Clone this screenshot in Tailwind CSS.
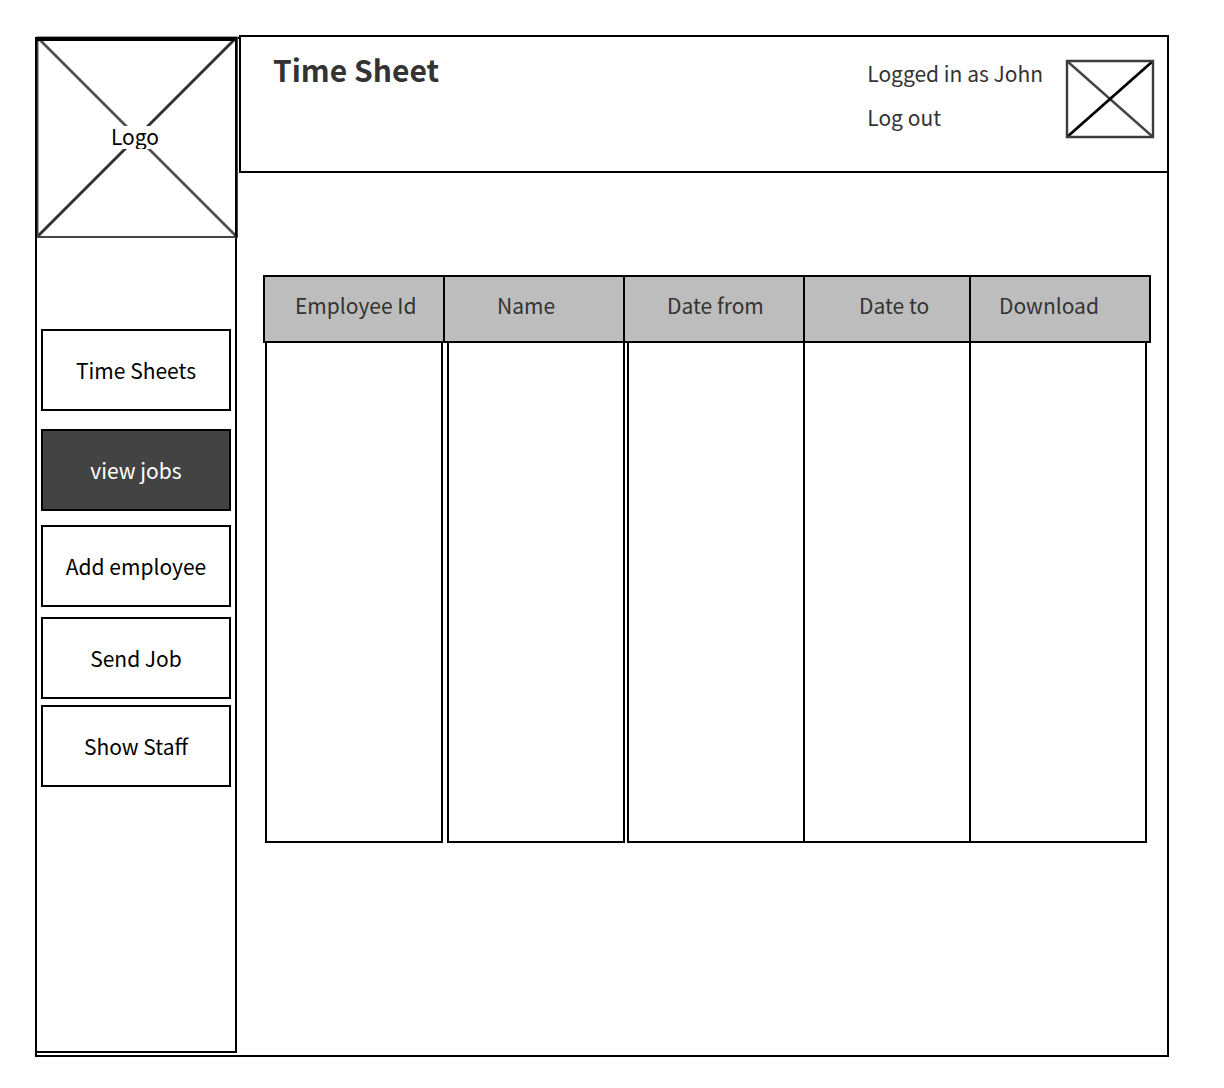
<!DOCTYPE html>
<html lang="en">
<head>
<meta charset="utf-8">
<meta name="viewport" content="width=device-width, initial-scale=1">
<title>Time Sheet</title>
<script src="https://cdn.jsdelivr.net/npm/@tailwindcss/browser@4"></script>
</head>
<body class="bg-white font-['Noto_Sans_CJK_SC','Noto_Sans',sans-serif] text-[21px] leading-8 text-[#333]">
<div class="flex min-h-screen pt-[35px] pr-[55px] pb-[31px] pl-[35px]">

  <aside class="mt-[2px] flex w-[204px] shrink-0 flex-col border-y-2 border-l-2 border-black pr-[2px] pb-[2px]">
    <div class="flex flex-1 flex-col border-y-2 border-r-2 border-black">
      <div class="-mt-[5px] -mr-[3px] -ml-px grid h-[202px] place-items-center text-black">
        <svg class="col-start-1 row-start-1 size-full" viewBox="0 0 202 202" fill="none" aria-hidden="true">
          <path d="M2 2L200 200" stroke="#505050" stroke-width="2.6"/>
          <path d="M200 2L2 200" stroke="#333" stroke-width="3"/>
          <path d="M1.500 1.500H201V201H1.500Z" stroke="#444" stroke-width="2"/>
          <path d="M0 3H201" stroke="#000" stroke-width="4"/>
          <path d="M0 1V201M200 1V201" stroke="#000" stroke-width="2"/>
        </svg>
        <span class="col-start-1 row-start-1 mr-1 h-[23px] overflow-hidden bg-white leading-[21px]">Logo</span>
      </div>
      <nav class="mt-[91px] flex flex-col px-1" aria-label="Main">
        <button type="button" class="h-[82px] border-2 border-black bg-white text-black">Time Sheets</button>
        <button type="button" aria-current="page" class="mt-[18px] h-[82px] border-2 border-black bg-[#434343] text-white">view jobs</button>
        <button type="button" class="mt-[14px] h-[82px] border-2 border-black bg-white text-black">Add employee</button>
        <button type="button" class="mt-[10px] h-[82px] border-2 border-black bg-white text-black">Send Job</button>
        <button type="button" class="mt-[6px] h-[82px] border-2 border-black bg-white text-black">Show Staff</button>
      </nav>
    </div>
  </aside>

  <div class="flex min-w-0 flex-1 flex-col border-r-2 border-b-2 border-black">
    <header class="flex h-[138px] items-start border-y-2 border-l-2 border-black pr-3 pl-8">
      <h1 class="mt-3 text-[30px] leading-10 font-bold">Time Sheet</h1>
      <div class="mt-5 mr-[22px] ml-auto flex flex-col gap-3">
        <span>Logged in as John</span>
        <a href="#">Log out</a>
      </div>
      <svg class="mt-[22px] h-[80px] w-[90px] shrink-0" viewBox="0 0 90 80" fill="none" role="img" aria-label="Profile picture">
        <path d="M2 2L88 78" stroke="#444" stroke-width="2.400"/>
        <path d="M88 2L2 78" stroke="#000" stroke-width="2.800"/>
        <path d="M2 2H88V78H2Z" stroke="#3c3c3c" stroke-width="2.400"/>
      </svg>
    </header>

    <main class="pt-[102px] pr-4 pb-8 pl-6">
      <table class="w-full table-fixed border-separate border-spacing-0">
        <colgroup>
          <col class="w-[182px]"><col class="w-[180px]"><col class="w-[180px]"><col class="w-[166px]"><col class="w-[180px]">
        </colgroup>
        <thead>
          <tr class="h-[68px] bg-[#bdbdbd] text-left align-top *:border-y-2 *:border-r-2 *:border-black *:pt-3 *:font-normal">
            <th scope="col" class="border-l-2 pl-[30px]">Employee Id</th>
            <th scope="col" class="pl-[52px]">Name</th>
            <th scope="col" class="pb-1 pl-[42px]">Date from</th>
            <th scope="col" class="pl-[54px]">Date to</th>
            <th scope="col" class="pl-7">Download</th>
          </tr>
        </thead>
        <tbody>
          <tr class="*:p-0">
            <td><div class="mx-[2px] h-[500px] border-x-2 border-b-2 border-black"></div></td>
            <td><div class="ml-[2px] h-[500px] border-x-2 border-b-2 border-black"></div></td>
            <td><div class="ml-[2px] h-[500px] border-x-2 border-b-2 border-black"></div></td>
            <td><div class="h-[500px] border-r-2 border-b-2 border-black"></div></td>
            <td><div class="mr-1 h-[500px] border-r-2 border-b-2 border-black"></div></td>
          </tr>
        </tbody>
      </table>
    </main>
  </div>
</div>
</body>
</html>
